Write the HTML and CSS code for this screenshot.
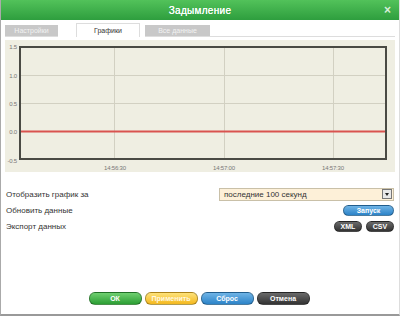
FILE: index.html
```html
<!DOCTYPE html>
<html>
	<head>
		<meta charset="utf-8">
		<title>Задымление</title>
		<link rel="stylesheet" href="styles.css">
	</head>
	<body>
		<div class="win">
			<div class="head">
				<span class="title">Задымление</span>
				<span class="close">×</span>
			</div>

			<div class="tabs">
				<span class="tab">Настройки</span>
				<span class="tab active">Графики</span>
				<span class="tab">Все данные</span>
				<span class="tab-rest"></span>
			</div>

			<div class="chart">
				<svg width="390" height="132" viewBox="0 0 390 132">
					<!-- сетка -->
					<g stroke="#d2d0c2" stroke-width="1">
						<line x1="14" y1="35.5" x2="382" y2="35.5" />
						<line x1="14" y1="63.5" x2="382" y2="63.5" />
						<line x1="109.5" y1="6" x2="109.5" y2="120" />
						<line x1="219.5" y1="6" x2="219.5" y2="120" />
						<line x1="328.5" y1="6" x2="328.5" y2="120" />
					</g>
					<line x1="14" y1="91.5" x2="382" y2="91.5" stroke="#d9534f" stroke-width="2" />
					<rect x="15" y="7" width="366" height="112" fill="none" stroke="#4a4a44" stroke-width="2" />

					<g class="ylab" text-anchor="end">
						<text x="12" y="9">1.5</text>
						<text x="12" y="38">1.0</text>
						<text x="12" y="66">0.5</text>
						<text x="12" y="94">0.0</text>
						<text x="12" y="123">-0.5</text>
					</g>
					<g class="xlab" text-anchor="middle">
						<text x="110" y="130">14:56:30</text>
						<text x="219" y="130">14:57:00</text>
						<text x="328" y="130">14:57:30</text>
					</g>
				</svg>
			</div>

			<div class="rows">
				<div class="row">
					<span>Отобразить график за</span>
					<div class="select">
						<span>последние 100 секунд</span>
						<span class="arrow"></span>
					</div>
				</div>
				<div class="row">
					<span>Обновить данные</span>
					<span class="btn blue wide">Запуск</span>
				</div>
				<div class="row">
					<span>Экспорт данных</span>
					<div class="pair">
						<span class="btn dark">XML</span>
						<span class="btn dark">CSV</span>
					</div>
				</div>
			</div>

			<div class="foot">
				<span class="btn big green">ОК</span>
				<span class="btn big yellow">Применить</span>
				<span class="btn big blue">Сброс</span>
				<span class="btn big dark">Отмена</span>
			</div>
		</div>
	</body>
</html>
```

FILE: styles.css
```css
* {margin: 0; padding: 0; box-sizing: border-box;}

body {
	font-family: "Liberation Sans", Arial, sans-serif;
	font-size: 8px;
	color: #333;
	background: #fff;
}

.win {
	width: 400px;
	height: 316px;
	border-left: 1px solid #aaa;
	border-right: 1px solid #ddd;
	border-bottom: 2px solid #999;
	display: flex;
	flex-direction: column;
}

.head {
	height: 20px;
	background: linear-gradient(#52c25a, #2e9e3e);
	color: #fff;
	display: flex;
	align-items: center;
	justify-content: center;
	position: relative;
}

.head .title {
	font-size: 10px;
	letter-spacing: 0.3px;
	text-shadow: 0 0 0.4px #fff;
}

.head .close {
	position: absolute;
	right: 8px;
	top: 3px;
	font-size: 12px;
	font-weight: bold;
	color: #d8eed8;
}

.tabs {
	display: flex;
	align-items: flex-end;
	padding: 0 4px;
	height: 17px;
}

.tab {
	height: 12px;
	width: 53px;
	margin-right: 18px;
	background: #c8c8c8;
	color: #f2f2f2;
	text-align: center;
	line-height: 12px;
	font-size: 7px;
	border-bottom: 1px solid #ddd;
}

.tab.active {
	height: 14px;
	width: 64px;
	margin-right: 5px;
	background: #fff;
	color: #333;
	border: 1px solid #ddd;
	border-bottom: none;
	line-height: 13px;
}

.tab:nth-child(3) {
	width: 65px;
	margin-right: 0;
}

.tab-rest {
	flex: 1;
	border-bottom: 1px solid #ddd;
}

.chart {
	margin: 3px 4px 0 4px;
	background: #efeee2;
	height: 132px;
}

.chart svg {
	display: block;
}

.chart text {
	font-family: "Liberation Sans", sans-serif;
	font-size: 6px;
	fill: #777;
	letter-spacing: -0.2px;
}

.rows {
	padding: 15px 5px 0 5px;
	display: flex;
	flex-direction: column;
	gap: 2px;
}

.row {
	display: flex;
	justify-content: space-between;
	align-items: center;
	height: 14px;
}

.select {
	width: 175px;
	height: 13px;
	background: #fdf0d8;
	border: 1px solid #c9c0a8;
	display: flex;
	align-items: center;
	justify-content: space-between;
	padding-left: 4px;
}

.select .arrow {
	width: 10px;
	height: 10px;
	margin-right: 1px;
	background: #e8e8e8;
	border: 1px solid #777;
	position: relative;
}

.select .arrow::after {
	content: "";
	position: absolute;
	left: 2px;
	top: 3px;
	border-left: 2px solid transparent;
	border-right: 2px solid transparent;
	border-top: 3px solid #222;
}

.btn {
	display: inline-block;
	height: 11px;
	line-height: 9px;
	border-radius: 6px;
	text-align: center;
	font-size: 7px;
	font-weight: bold;
	color: #fff;
	border: 1px solid rgba(0, 0, 0, 0.3);
}

.pair {
	display: flex;
	gap: 4px;
}

.pair .btn {
	width: 28px;
}

.btn.wide {
	width: 51px;
}

.blue {
	background: linear-gradient(#6fb4e6, #2c83c8);
}

.dark {
	background: linear-gradient(#6a6a6a, #333);
}

.green {
	background: linear-gradient(#6fd070, #2c9e34);
}

.yellow {
	background: linear-gradient(#fde27a, #f4b81e);
	color: #fff8e0;
}

.foot {
	margin-top: auto;
	margin-bottom: 9px;
	display: flex;
	justify-content: center;
	gap: 3px;
	padding-right: 2px;
}

.btn.big {
	width: 53px;
	height: 13px;
	line-height: 11px;
}
```
